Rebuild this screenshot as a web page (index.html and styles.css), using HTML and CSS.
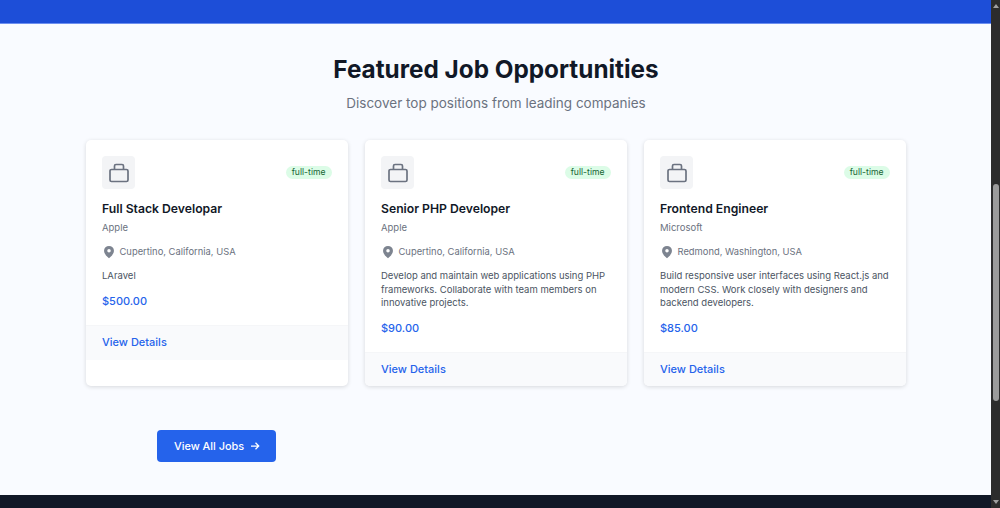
FILE: index.html
```html
<!DOCTYPE html>
<html lang="en">
<head>
    <meta charset="UTF-8">
    <meta name="viewport" content="width=device-width, initial-scale=1.0">
    <title>Featured Job Opportunities</title>
    <link rel="stylesheet" href="styles.css">
</head>
<body>
    <div class="window">
        <div class="page">
            <div class="top-bar"></div>
            <main class="jobs">
                <h2>Featured Job Opportunities</h2>
                <p class="subtitle">Discover top positions from leading companies</p>

                <div class="job-grid">
                    <div class="job-card">
                        <div class="job-body">
                            <div class="job-head">
                                <div class="job-icon">
                                    <svg viewBox="0 0 24 24" width="24" height="24"><path d="M4.500 8.500h15a1.500 1.500 0 0 1 1.500 1.500v9a1.500 1.500 0 0 1-1.500 1.500h-15a1.500 1.500 0 0 1-1.500-1.500v-9a1.500 1.500 0 0 1 1.500-1.500zM7.500 8.500V5a1.500 1.500 0 0 1 1.500-1.500h6A1.500 1.500 0 0 1 16.500 5v3.500"/></svg>
                                </div>
                                <span class="badge">full-time</span>
                            </div>
                            <h3>Full Stack Developar</h3>
                            <p class="company">Apple</p>
                            <p class="location">
                                <svg viewBox="0 0 24 24" width="14" height="14"><path fill-rule="evenodd" d="M12 1.500a8.500 8.500 0 0 0-8.500 8.500c0 5.500 6 11 8.500 12.500 2.500-1.500 8.500-7 8.500-12.500A8.500 8.500 0 0 0 12 1.500zm0 11.500a3 3 0 1 1 0-6 3 3 0 0 1 0 6z"/></svg>
                                Cupertino, California, USA
                            </p>
                            <p class="desc">LAravel</p>
                            <p class="price">$500.00</p>
                        </div>
                        <div class="job-foot"><a href="#">View Details</a></div>
                    </div>

                    <div class="job-card">
                        <div class="job-body">
                            <div class="job-head">
                                <div class="job-icon">
                                    <svg viewBox="0 0 24 24" width="24" height="24"><path d="M4.500 8.500h15a1.500 1.500 0 0 1 1.500 1.500v9a1.500 1.500 0 0 1-1.500 1.500h-15a1.500 1.500 0 0 1-1.500-1.500v-9a1.500 1.500 0 0 1 1.500-1.500zM7.500 8.500V5a1.500 1.500 0 0 1 1.500-1.500h6A1.500 1.500 0 0 1 16.500 5v3.500"/></svg>
                                </div>
                                <span class="badge">full-time</span>
                            </div>
                            <h3>Senior PHP Developer</h3>
                            <p class="company">Apple</p>
                            <p class="location">
                                <svg viewBox="0 0 24 24" width="14" height="14"><path fill-rule="evenodd" d="M12 1.500a8.500 8.500 0 0 0-8.500 8.500c0 5.500 6 11 8.500 12.500 2.500-1.500 8.500-7 8.500-12.500A8.500 8.500 0 0 0 12 1.500zm0 11.500a3 3 0 1 1 0-6 3 3 0 0 1 0 6z"/></svg>
                                Cupertino, California, USA
                            </p>
                            <p class="desc">Develop and maintain web applications using PHP frameworks. Collaborate with team members on innovative projects.</p>
                            <p class="price">$90.00</p>
                        </div>
                        <div class="job-foot"><a href="#">View Details</a></div>
                    </div>

                    <div class="job-card">
                        <div class="job-body">
                            <div class="job-head">
                                <div class="job-icon">
                                    <svg viewBox="0 0 24 24" width="24" height="24"><path d="M4.500 8.500h15a1.500 1.500 0 0 1 1.500 1.500v9a1.500 1.500 0 0 1-1.500 1.500h-15a1.500 1.500 0 0 1-1.500-1.500v-9a1.500 1.500 0 0 1 1.500-1.500zM7.500 8.500V5a1.500 1.500 0 0 1 1.500-1.500h6A1.500 1.500 0 0 1 16.500 5v3.500"/></svg>
                                </div>
                                <span class="badge">full-time</span>
                            </div>
                            <h3>Frontend Engineer</h3>
                            <p class="company">Microsoft</p>
                            <p class="location">
                                <svg viewBox="0 0 24 24" width="14" height="14"><path fill-rule="evenodd" d="M12 1.500a8.500 8.500 0 0 0-8.500 8.500c0 5.500 6 11 8.500 12.500 2.500-1.500 8.500-7 8.500-12.500A8.500 8.500 0 0 0 12 1.500zm0 11.500a3 3 0 1 1 0-6 3 3 0 0 1 0 6z"/></svg>
                                Redmond, Washington, USA
                            </p>
                            <p class="desc">Build responsive user interfaces using React.js and modern CSS. Work closely with designers and backend developers.</p>
                            <p class="price">$85.00</p>
                        </div>
                        <div class="job-foot"><a href="#">View Details</a></div>
                    </div>
                </div>

                <a class="all-jobs" href="#">
                    View All Jobs
                    <svg viewBox="0 0 24 24" width="12" height="12"><path d="M4 12h15M13 5.500l6.500 6.500-6.500 6.500"/></svg>
                </a>
            </main>
            <div class="bottom-bar"></div>
        </div>

        <div class="scrollbar">
            <span class="arrow-up"></span>
            <span class="thumb"></span>
            <span class="arrow-down"></span>
        </div>
    </div>
</body>
</html>
```

FILE: styles.css
```css
* {
    font-family: Inter, "Liberation Sans", sans-serif;
    margin: 0;
    padding: 0;
    box-sizing: border-box;
}
body {
    background-color: #f9fafb;
    height: 100vh;
    overflow: hidden;
}
a {
    text-decoration: none;
}
.window {
    display: flex;
    height: 508px;
}
.page {
    flex: 1;
    display: flex;
    flex-direction: column;
    background: #f9fbff;
}
.top-bar {
    height: 23px;
    background: #1d4ed8;
    box-shadow: 0 1px 0 #6d8ff0;
}
.bottom-bar {
    height: 13px;
    background: #111827;
}
.jobs {
    flex: 1;
    padding: 30px 85px 0 86px;
}
h2 {
    font-size: 24.3px;
    line-height: 32px;
    font-weight: 700;
    color: #111827;
    text-align: center;
}
.subtitle {
    margin-top: 8px;
    font-size: 13.5px;
    line-height: 20px;
    color: #6b7280;
    text-align: center;
}
.job-grid {
    display: grid;
    grid-template-columns: repeat(3, 261.5px);
    gap: 17.5px;
    margin-top: 27px;
    height: 246px;
}
.job-card {
    background: white;
    border-radius: 5px;
    box-shadow: 0 1px 4px rgba(0,0,0,0.14);
    overflow: hidden;
}
.job-body {
    padding: 16px 16px 16px;
}
.job-head {
    display: flex;
    align-items: center;
    justify-content: space-between;
}
.job-icon {
    width: 33px;
    height: 33px;
    background: #f3f4f6;
    border-radius: 4px;
    display: flex;
    align-items: center;
    justify-content: center;
}
.job-icon svg {
    fill: none;
    stroke: #6b7280;
    stroke-width: 1.7;
}
.badge {
    background: #dcfce7;
    color: #166534;
    font-size: 8.6px;
    line-height: 13px;
    padding: 0 6px;
    border-radius: 7px;
}
h3 {
    margin-top: 11px;
    font-size: 12.2px;
    line-height: 18px;
    font-weight: 600;
    color: #111827;
}
.company {
    margin-top: 3px;
    font-size: 9.5px;
    line-height: 14px;
    color: #6b7280;
}
.location {
    display: flex;
    align-items: center;
    gap: 3.5px;
    margin-top: 10px;
    font-size: 9.4px;
    line-height: 14px;
    color: #6b7280;
}
.location svg {
    fill: #7d8490;
}
.desc {
    margin-top: 10px;
    font-size: 9.5px;
    line-height: 13.5px;
    color: #4b5563;
}
.price {
    margin-top: 10px;
    font-size: 11px;
    line-height: 16px;
    font-weight: 500;
    color: #2563eb;
}
.job-foot {
    background: #f9fafc;
    border-top: 1px solid #f5f6f8;
    padding: 7px 16px 9px;
    font-size: 11px;
    line-height: 18px;
}
.job-foot a {
    color: #2563eb;
    font-weight: 500;
}
.all-jobs {
    display: inline-flex;
    align-items: center;
    gap: 5px;
    margin: 44px 0 0 71px;
    height: 32px;
    padding: 0 15px 0 17px;
    background: #2563eb;
    border-radius: 4px;
    color: white;
    font-size: 10.9px;
    font-weight: 500;
}
.all-jobs svg {
    fill: none;
    stroke: white;
    stroke-width: 2.5;
}
.scrollbar {
    width: 9px;
    background: #2c2c2c;
    display: flex;
    flex-direction: column;
    align-items: center;
}
.arrow-up {
    margin-top: 4px;
    border-left: 3px solid transparent;
    border-right: 3px solid transparent;
    border-bottom: 4px solid #a0a0a0;
}
.thumb {
    width: 6px;
    height: 217px;
    margin-top: 176px;
    background: #9b9b9b;
    border-radius: 3px;
}
.arrow-down {
    margin-top: auto;
    margin-bottom: 4px;
    border-left: 3px solid transparent;
    border-right: 3px solid transparent;
    border-top: 4px solid #a0a0a0;
}
```
